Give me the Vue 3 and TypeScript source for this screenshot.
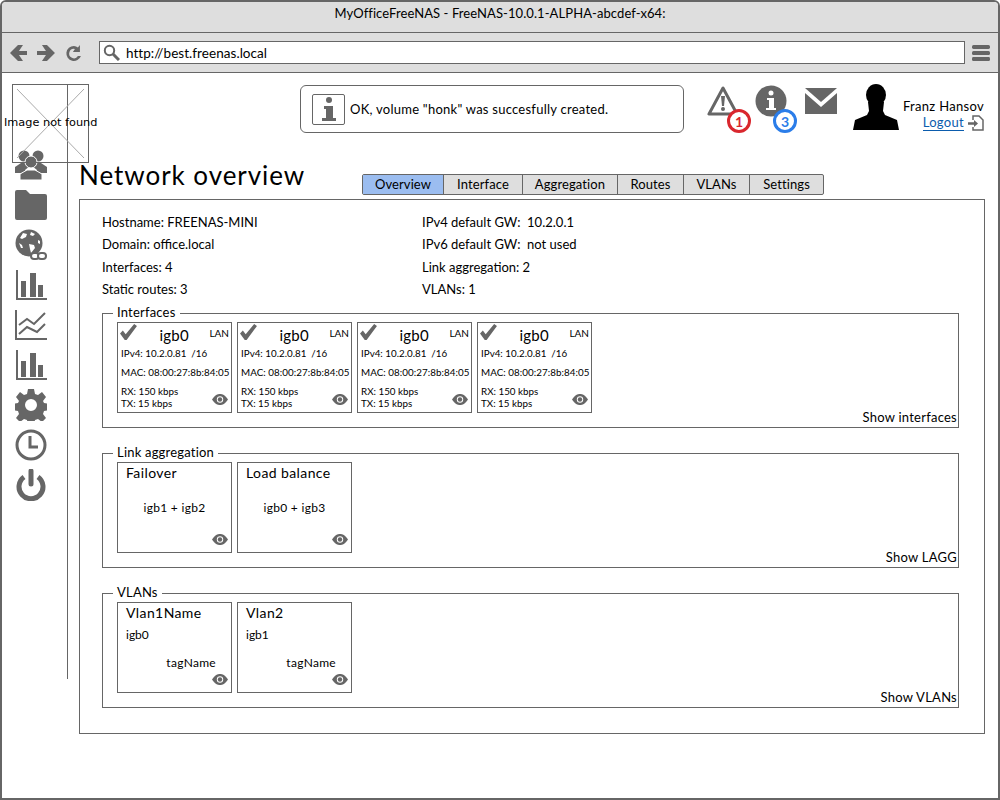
<script setup lang="ts">
interface Iface {
  name: string
  role: string
  ipv4: string
  mac: string
  rx: string
  tx: string
}

const leftInfo = ['Hostname: FREENAS-MINI', 'Domain: office.local', 'Interfaces: 4', 'Static routes: 3']
const rightInfo = ['IPv4 default GW:  10.2.0.1', 'IPv6 default GW:  not used', 'Link aggregation: 2', 'VLANs: 1']
const tabs = ['Overview', 'Interface', 'Aggregation', 'Routes', 'VLANs', 'Settings']

const ifaces: Iface[] = Array.from({ length: 4 }, () => ({
  name: 'igb0',
  role: 'LAN',
  ipv4: 'IPv4: 10.2.0.81  /16',
  mac: 'MAC: 08:00:27:8b:84:05',
  rx: 'RX: 150 kbps',
  tx: 'TX: 15 kbps'
}))
const laggs = [
  { name: 'Failover', members: 'igb1 + igb2' },
  { name: 'Load balance', members: 'igb0 + igb3' }
]
const vlans = [
  { name: 'Vlan1Name', parent: 'igb0', tag: 'tagName' },
  { name: 'Vlan2', parent: 'igb1', tag: 'tagName' }
]
</script>

<template>
  <div class="window">
    <header class="titlebar">MyOfficeFreeNAS - FreeNAS-10.0.1-ALPHA-abcdef-x64:</header>

    <div class="toolbar">
      <svg class="nav" width="72" height="20" viewBox="0 0 72 20" fill="#666">
        <path d="M0 10 8 2h5l-4 6h8v4H9l4 6H8z" />
        <path d="M45 10 37 2h-5l4 6h-9v4h9l-4 6h5z" />
        <path d="M64 3a7.5 7.5 0 1 0 7 10h-3a4.7 4.7 0 1 1-3-7l-2 3h7V2l-2 2.5A8 8 0 0 0 64 3z" />
      </svg>
      <div class="address">
        <svg width="17" height="17" viewBox="0 0 17 17" fill="none" stroke="#666">
          <circle cx="6.5" cy="6.5" r="4.7" stroke-width="2" />
          <path d="m10 10 6 6" stroke-width="3" />
        </svg>
        <span>http://best.freenas.local</span>
      </div>
      <svg width="18" height="16" viewBox="0 0 18 16" fill="#666">
        <rect width="18" height="4" rx="1.5" />
        <rect y="6" width="18" height="4" rx="1.5" />
        <rect y="12" width="18" height="4" rx="1.5" />
      </svg>
    </div>

    <div class="body">
      <div class="broken-image">
        <svg width="77" height="79" viewBox="0 0 77 79" stroke="#aaa" fill="none">
          <path d="m5 5 67 69M72 5 5 74" />
        </svg>
        <span>Image not found</span>
      </div>

      <nav class="sidebar">
        <svg width="32" height="32" viewBox="0 0 32 32" fill="#666">
          <circle cx="9" cy="7" r="5.5" />
          <circle cx="23" cy="7" r="5.5" />
          <path d="M0 24v-6l6-4h6l3 3-5 4v3zM32 24v-6l-6-4h-6l-3 3 5 4v3z" />
          <circle cx="16" cy="13" r="6" stroke="#fff" />
          <path d="M5 31v-6l7-4h8l7 4v6z" stroke="#fff" />
        </svg>
        <svg width="32" height="32" viewBox="0 0 32 32" fill="#666">
          <path d="M0 3q0-2 2-2h9l4 4h15q2 0 2 2v22q0 2-2 2H2q-2 0-2-2z" />
        </svg>
        <svg width="32" height="32" viewBox="0 0 32 32">
          <circle cx="14" cy="14" r="13.5" fill="#666" />
          <path d="M8 4l4 1-1 3-4 2-2-1zM16 3l4 2-2 2-3-1zM14 15l5 1 1 3-4 5-1-4zM23 11l2 1v3l-2-1zM4 14l3 2 1 3-2 0z" fill="#fff" />
          <rect x="16" y="24" width="8" height="6" rx="3" fill="#fff" stroke="#666" stroke-width="2" />
          <rect x="23" y="24" width="8" height="6" rx="3" fill="#fff" stroke="#666" stroke-width="2" />
        </svg>
        <svg width="32" height="32" viewBox="0 0 32 32" fill="#666">
          <path d="M1 1h2v28h29v2H1zM6 12h5v16H6zM15 4h6v24h-6zM23 16h5v12h-5z" />
        </svg>
        <svg width="32" height="32" viewBox="0 0 32 32" fill="none" stroke="#666" stroke-width="2">
          <path d="M1 1v29h31" />
          <path d="m4 16 8-6 7 5 11-11M4 25l8-7 6 3 4 2 8-8" />
        </svg>
        <svg width="32" height="32" viewBox="0 0 32 32" fill="#666">
          <path d="M1 1h2v28h29v2H1zM6 12h5v16H6zM15 4h6v24h-6zM23 16h5v12h-5z" />
        </svg>
        <svg width="32" height="32" viewBox="0 0 32 32" fill="#666">
          <path fill-rule="evenodd" d="M13 0h6l1 5 3 1 4-3 4 5-3 4 1 2 5 1v6l-5 1-1 3 3 4-4 4-4-3-3 1-1 5h-6l-1-5-3-1-4 3-4-4 3-4-1-3-5-1v-6l5-1 1-2-3-4 4-5 4 3 3-1zM16 10a6 6 0 1 0 0 12 6 6 0 0 0 0-12z" />
        </svg>
        <svg width="32" height="32" viewBox="0 0 32 32" fill="none" stroke="#666" stroke-width="3">
          <circle cx="16" cy="16" r="14" />
          <path d="M15 7v11h8" />
        </svg>
        <svg width="32" height="32" viewBox="0 0 32 32" fill="none" stroke="#666" stroke-width="5">
          <path d="M9 8a12 12 0 1 0 14 0" />
          <path d="M16 2v13" stroke-linecap="round" />
        </svg>
      </nav>

      <main class="main">
        <div class="topbar">
          <div class="notice">
            <div class="notice-icon">
              <svg width="20" height="26" viewBox="0 0 20 26" fill="#666">
                <circle cx="10" cy="4" r="3" />
                <path d="M5 10h9v12h3v3H3v-3h4v-9H5z" />
              </svg>
            </div>
            <span>OK, volume "honk" was succesfully created.</span>
          </div>

          <div class="status-icon warn">
            <svg width="32" height="32" viewBox="0 0 32 32">
              <path d="M16 3 2 29h28z" fill="none" stroke="#666" stroke-width="3" stroke-linejoin="round" />
              <path d="M14 11h4l-1 10h-2z" fill="#666" />
              <circle cx="16" cy="24" r="2" fill="#666" />
            </svg>
            <b class="badge red">1</b>
          </div>
          <div class="status-icon inform">
            <svg width="32" height="32" viewBox="0 0 32 32">
              <circle cx="16" cy="16" r="15.5" fill="#666" />
              <circle cx="16" cy="8" r="2.5" fill="#fff" />
              <path d="M12 13h7v10h2v2H11v-2h3v-8h-2z" fill="#fff" />
            </svg>
            <b class="badge blue">3</b>
          </div>
          <svg class="mail" width="32" height="26" viewBox="0 0 32 26" fill="#666">
            <path d="M0 0h32L16 14z" />
            <path d="M0 5v21h32V5L16 19z" />
          </svg>
          <svg class="avatar" width="46" height="46" viewBox="0 0 46 46" fill="#000">
            <ellipse cx="23" cy="11" rx="10" ry="11" />
            <path d="M15 18h16l-1 9 2 4 12 5 2 10H0l2-10 12-5 2-4z" />
          </svg>
          <div class="user">
            <span>Franz Hansov</span>
            <div class="logout-row">
              <a class="logout">Logout</a>
              <svg width="16" height="16" viewBox="0 0 16 16" fill="none" stroke="#666" stroke-width="1.5">
                <path d="M5 5V1h6l4 4v10H5v-3" />
                <path d="M0 8.5h7" stroke-width="2.5" />
                <path d="m6 5 4 3.5L6 12z" fill="#666" stroke="none" />
              </svg>
            </div>
          </div>
        </div>

        <div class="heading">
          <h1>Network overview</h1>
          <div class="tabs">
            <div v-for="(tab, i) in tabs" :key="tab" class="tab" :class="{ active: i === 0 }">{{ tab }}</div>
          </div>
        </div>

        <section class="panel">
          <div class="summary">
            <div class="summary-col">
              <div v-for="line in leftInfo" :key="line">{{ line }}</div>
            </div>
            <div class="summary-col">
              <div v-for="line in rightInfo" :key="line">{{ line }}</div>
            </div>
          </div>

          <div class="group">
            <span class="legend">Interfaces</span>
            <div class="cards">
              <div v-for="(item, i) in ifaces" :key="i" class="card iface">
                <div class="iface-head">
                  <svg class="check" width="17" height="16" viewBox="0 0 18 17" fill="#666">
                    <path d="M0 10l3-3 3 4L15 0l3 2L7 17h-2z" />
                  </svg>
                  <span class="iface-name">{{ item.name }}</span>
                  <span class="role">{{ item.role }}</span>
                </div>
                <div class="line ipv4">{{ item.ipv4 }}</div>
                <div class="line mac">{{ item.mac }}</div>
                <div class="iface-foot">
                  <div class="rates">
                    <div>{{ item.rx }}</div>
                    <div>{{ item.tx }}</div>
                  </div>
                  <svg class="eye" width="16" height="11" viewBox="0 0 16 11">
                    <path d="M0 5.5C3 1 5.5 0 8 0s5 1 8 5.5C13 10 10.5 11 8 11S3 10 0 5.5z" fill="#666" />
                    <circle cx="8" cy="5.5" r="3.2" fill="#fff" />
                    <circle cx="8" cy="5.5" r="2.2" fill="#666" />
                  </svg>
                </div>
              </div>
            </div>
            <div class="show-link">Show interfaces</div>
          </div>

          <div class="group">
            <span class="legend">Link aggregation</span>
            <div class="cards">
              <div v-for="item in laggs" :key="item.name" class="card lagg">
                <div class="card-title">{{ item.name }}</div>
                <div class="members">{{ item.members }}</div>
                <svg class="eye" width="16" height="11" viewBox="0 0 16 11">
                  <path d="M0 5.5C3 1 5.5 0 8 0s5 1 8 5.5C13 10 10.5 11 8 11S3 10 0 5.5z" fill="#666" />
                  <circle cx="8" cy="5.5" r="3.2" fill="#fff" />
                  <circle cx="8" cy="5.5" r="2.2" fill="#666" />
                </svg>
              </div>
            </div>
            <div class="show-link">Show LAGG</div>
          </div>

          <div class="group">
            <span class="legend">VLANs</span>
            <div class="cards">
              <div v-for="item in vlans" :key="item.name" class="card lagg">
                <div class="card-title">{{ item.name }}</div>
                <div class="parent">{{ item.parent }}</div>
                <div class="tag">{{ item.tag }}</div>
                <svg class="eye" width="16" height="11" viewBox="0 0 16 11">
                  <path d="M0 5.5C3 1 5.5 0 8 0s5 1 8 5.5C13 10 10.5 11 8 11S3 10 0 5.5z" fill="#666" />
                  <circle cx="8" cy="5.5" r="3.2" fill="#fff" />
                  <circle cx="8" cy="5.5" r="2.2" fill="#666" />
                </svg>
              </div>
            </div>
            <div class="show-link">Show VLANs</div>
          </div>
        </section>
      </main>
    </div>
  </div>
</template>

<style scoped>
.window {
  position: relative;
  box-sizing: border-box;
  width: 1000px;
  height: 800px;
  border: 2px solid #666;
  border-radius: 6px 6px 0 0;
  background: #fff;
  color: #000;
  font-family: Lato, "Open Sans", sans-serif;
  font-size: 13px;
  overflow: hidden;
}

.titlebar {
  height: 30px;
  background: #dedede;
  border-bottom: 1px solid #666;
  font-size: 13px;
  letter-spacing: 0.08px;
  line-height: 22px;
  text-align: center;
}

.toolbar {
  display: flex;
  align-items: center;
  height: 39px;
  padding: 0 8px;
  background: #dedede;
  border-bottom: 1px solid #666;
}

.nav {
  margin-right: 17px;
}

.address {
  display: flex;
  align-items: center;
  gap: 6px;
  box-sizing: border-box;
  width: 867px;
  height: 23px;
  margin-right: 7px;
  padding-left: 3px;
  background: #fff;
  border: 1px solid #666;
  font-size: 13.5px;
  letter-spacing: 0.05px;
}

.body {
  display: flex;
  align-items: flex-start;
}

.broken-image {
  position: absolute;
  left: 10px;
  top: 82px;
  box-sizing: border-box;
  width: 77px;
  height: 79px;
  border: 1px solid #666;
}

.broken-image svg {
  position: absolute;
  left: -1px;
  top: -1px;
}

.broken-image span {
  position: absolute;
  left: -9px;
  top: 31px;
  white-space: nowrap;
  font-family: "DejaVu Sans", sans-serif;
  font-size: 11.3px;
}

.sidebar {
  display: flex;
  flex-direction: column;
  gap: 8px;
  box-sizing: border-box;
  width: 66px;
  height: 594px;
  margin-top: 12px;
  padding: 64px 0 0 13px;
  border-right: 1px solid #666;
}

.main {
  flex: 1;
  padding: 0 13px 0 11px;
}

.topbar {
  display: flex;
  align-items: flex-start;
  height: 87px;
  padding: 12px 0 0 221px;
  box-sizing: border-box;
}

.notice {
  display: flex;
  align-items: center;
  gap: 5px;
  box-sizing: border-box;
  width: 384px;
  height: 48px;
  padding-left: 11px;
  border: 1px solid #666;
  border-radius: 6px;
  letter-spacing: 0.25px;
}

.notice-icon {
  display: flex;
  align-items: center;
  justify-content: center;
  width: 31px;
  height: 29px;
  border: 1px solid #666;
  border-radius: 2px;
}

.status-icon {
  position: relative;
  width: 32px;
  height: 32px;
}

.warn {
  margin-left: 23px;
}

.inform {
  margin-left: 16px;
}

.badge {
  position: absolute;
  top: 24px;
  display: flex;
  align-items: center;
  justify-content: center;
  box-sizing: border-box;
  width: 24px;
  height: 24px;
  background: #fff;
  border: 3px solid;
  border-radius: 50%;
  font-size: 14px;
}

.red {
  left: 20px;
  color: #d9272e;
}

.blue {
  left: 18px;
  color: #2b7de9;
}

.mail {
  margin: 3px 0 0 18px;
}

.avatar {
  margin: -1px 0 0 16px;
}

.user {
  display: flex;
  flex-direction: column;
  align-items: flex-end;
  margin: 13px 0 0 4px;
  white-space: nowrap;
  letter-spacing: 0.3px;
}

.logout-row {
  display: flex;
  gap: 4px;
  margin-top: 1px;
}

.logout {
  color: #0b5cad;
  border-bottom: 1px solid #0b5cad;
  line-height: 15px;
  height: 15px;
}

.heading {
  display: flex;
  align-items: flex-end;
  height: 35px;
  margin-bottom: 4px;
}

h1 {
  width: 283px;
  margin: 0;
  align-self: flex-start;
  font-size: 26px;
  font-weight: 400;
  letter-spacing: 0.95px;
  line-height: 31px;
}

.tabs {
  display: grid;
  grid-template-columns: 80px 79px 95px 66px 66px 74px;
  box-sizing: border-box;
  height: 21px;
  border: 1px solid #666;
  border-radius: 2px;
  background: #dedede;
}

.tab {
  text-align: center;
  border-left: 1px solid #666;
  letter-spacing: 0.1px;
  line-height: 19px;
}

.tab.active {
  background: #9bbdf0;
  border-left: 0;
}

.panel {
  box-sizing: border-box;
  height: 535px;
  padding: 11px 25px 0 22px;
  border: 1px solid #666;
}

.summary {
  display: flex;
  height: 102px;
}

.summary-col {
  width: 320px;
  line-height: 22.3px;
  white-space: pre;
}

.group {
  position: relative;
  box-sizing: border-box;
  height: 115px;
  margin-bottom: 25px;
  padding: 8px 0 0 14px;
  border: 1px solid #666;
}

.legend {
  position: absolute;
  left: 10px;
  top: -10px;
  padding: 0 4px;
  background: #fff;
  letter-spacing: 0.2px;
  line-height: 16px;
}

.cards {
  display: flex;
  gap: 5px;
}

.card {
  position: relative;
  box-sizing: border-box;
  width: 115px;
  height: 91px;
  border: 1px solid #666;
}

.iface {
  padding: 1px 2px 0 3px;
  font-size: 9.8px;
}

.iface-head {
  display: flex;
  align-items: flex-start;
  height: 21px;
}

.check {
  margin-left: -1px;
  margin-right: 2px;
}

.iface-name {
  flex: 1;
  padding-top: 2px;
  text-align: center;
  font-size: 15px;
  letter-spacing: 0.3px;
}

.role {
  padding-top: 3px;
  font-size: 10px;
}

.line {
  white-space: pre;
  line-height: 13px;
}

.ipv4 {
  margin-top: 2px;
}

.mac {
  margin-top: 6px;
  white-space: nowrap;
  letter-spacing: 0.05px;
}

.iface-foot {
  display: flex;
  justify-content: space-between;
  align-items: flex-end;
  margin-top: 6px;
}

.rates {
  line-height: 12px;
}

.iface-foot .eye {
  margin: 0 1px 4px 0;
}

.lagg .eye {
  position: absolute;
  right: 3px;
  bottom: 7px;
}

.card-title {
  padding: 1px 0 0 8px;
  font-size: 14px;
  letter-spacing: 0.4px;
}

.members {
  margin-top: 19px;
  text-align: center;
  font-size: 12px;
  letter-spacing: 0.3px;
}

.parent {
  padding: 6px 0 0 8px;
  font-size: 12px;
}

.tag {
  margin-top: 13px;
  padding-right: 15px;
  text-align: right;
  font-size: 12px;
  letter-spacing: 0.3px;
}

.show-link {
  position: absolute;
  right: 1px;
  bottom: 2px;
  letter-spacing: 0.25px;
}
</style>
